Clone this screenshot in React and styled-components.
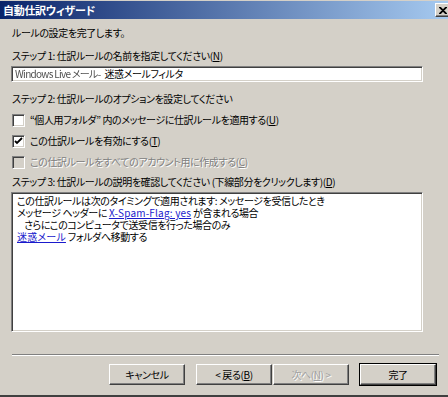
import React from "react";
import styled, { createGlobalStyle } from "styled-components";

const GlobalStyle = createGlobalStyle`
  html, body {
    margin: 0;
    padding: 0;
    background: #d4d0c8;
  }
  body {
    font-family: "Noto Sans CJK JP", "Noto Sans", sans-serif;
    font-size: 10px;
    letter-spacing: -0.4px;
    color: #000;
    font-feature-settings: "palt";
  }
`;

export default function App() {
  return (
    <>
      <GlobalStyle />
      <Window>
        <TitleBar>
          <Title>自動仕訳ウィザード</Title>
          <CloseButton>
            <svg width="8" height="7" viewBox="0 0 8 7">
              <path d="M0 0 L7 7 M1 0 L8 7 M7 0 L0 7 M8 0 L1 7" stroke="#000" strokeWidth="1.2" />
            </svg>
          </CloseButton>
        </TitleBar>

        <Body>
          <Label $top={7}>ルールの設定を完了します。</Label>
          <Label $top={9}>
            ステップ 1: 仕訳ルールの名前を指定してください(<U>N</U>)
          </Label>
          <TextBox>
            <Blurred>Windows Live メール-</Blurred>
            迷惑メールフィルタ
          </TextBox>

          <Label $top={10}>ステップ 2: 仕訳ルールのオプションを設定してください</Label>
          <CheckRow $top={7}>
            <Box />
            <span>“個人用フォルダ” 内のメッセージに仕訳ルールを適用する(<U>U</U>)</span>
          </CheckRow>
          <CheckRow>
            <Box>
              <svg width="9" height="9" viewBox="0 0 9 9">
                <path d="M1 4 L3 6 L8 1" stroke="#000" strokeWidth="1.8" fill="none" />
              </svg>
            </Box>
            <span>この仕訳ルールを有効にする(<U>T</U>)</span>
          </CheckRow>
          <CheckRow $disabled>
            <Box $disabled />
            <span>この仕訳ルールをすべてのアカウント用に作成する(<U>C</U>)</span>
          </CheckRow>

          <Label $top={6}>
            ステップ 3: 仕訳ルールの説明を確認してください (下線部分をクリックします)(<U>D</U>)
          </Label>
          <Description>
            <Line>この仕訳ルールは次のタイミングで適用されます: メッセージを受信したとき</Line>
            <Line>
              メッセージ ヘッダーに <Link>X-Spam-Flag: yes</Link> が含まれる場合
            </Line>
            <Line $indent>さらにこのコンピュータで送受信を行った場合のみ</Line>
            <Line>
              <Link>迷惑メール</Link> フォルダへ移動する
            </Line>
          </Description>
        </Body>

        <Separator />
        <Footer>
          <Button>キャンセル</Button>
          <Pair>
            <Button>&lt; 戻る(<U>B</U>)</Button>
            <Button disabled>次へ(<U>N</U>) &gt;</Button>
          </Pair>
          <Button $default>完了</Button>
        </Footer>
      </Window>
    </>
  );
}

const Window = styled.div`
  width: 448px;
  height: 397px;
  box-sizing: border-box;
  display: flex;
  flex-direction: column;
  padding-top: 1px;
  border-bottom: 2px solid #404040;
  overflow: hidden;
`;

const TitleBar = styled.div`
  height: 18px;
  display: flex;
  align-items: center;
  justify-content: space-between;
  padding-left: 3px;
  background: linear-gradient(to right, #0a246a, #a6caf0);
`;

const Title = styled.div`
  color: #fff;
  font-weight: bold;
  font-size: 11px;
  line-height: 14px;
  letter-spacing: -0.3px;
`;

const CloseButton = styled.div`
  width: 16px;
  height: 14px;
  box-sizing: border-box;
  margin-right: -3px;
  display: flex;
  align-items: center;
  justify-content: center;
  background: #d4d0c8;
  border: 1px solid;
  border-color: #fff #404040 #404040 #fff;
  box-shadow: inset -1px -1px #808080;
`;

const Body = styled.div`
  display: flex;
  flex-direction: column;
  padding: 0 0 0 11px;
`;

const Label = styled.div`
  margin-top: ${(p) => p.$top || 0}px;
  padding-left: 1px;
  line-height: 14px;
  white-space: nowrap;
`;

const U = styled.span`
  text-decoration: underline;
`;

const TextBox = styled.div`
  margin-top: 3px;
  width: 412px;
  height: 16px;
  box-sizing: border-box;
  display: flex;
  align-items: center;
  padding-left: 3px;
  background: #fff;
  border: 1px solid;
  border-color: #808080 #fff #fff #808080;
  box-shadow: inset 1px 1px #404040, inset -1px -1px #d4d0c8;
  line-height: 14px;
  white-space: nowrap;
`;

const Blurred = styled.span`
  color: #505050;
  font-size: 10px;
  letter-spacing: -0.7px;
  filter: blur(0.7px);
  margin-right: 4px;
`;

const CheckRow = styled.div`
  margin-top: ${(p) => p.$top || 7}px;
  display: flex;
  align-items: center;
  gap: 5px;
  padding-left: 1px;
  line-height: 14px;
  white-space: nowrap;
  color: ${(p) => (p.$disabled ? "#808080" : "#000")};
  text-shadow: ${(p) => (p.$disabled ? "1px 1px #fff" : "none")};
`;

const Box = styled.div`
  width: 13px;
  height: 13px;
  box-sizing: border-box;
  display: flex;
  align-items: center;
  justify-content: center;
  background: ${(p) => (p.$disabled ? "#d4d0c8" : "#fff")};
  border: 1px solid;
  border-color: #808080 #fff #fff #808080;
  box-shadow: inset 1px 1px #404040, inset -1px -1px #d4d0c8;
`;

const Description = styled.div`
  margin-top: 3px;
  width: 412px;
  height: 140px;
  box-sizing: border-box;
  padding: 2px 5px;
  background: #fff;
  border: 1px solid;
  border-color: #808080 #fff #fff #808080;
  box-shadow: inset 1px 1px #404040, inset -1px -1px #d4d0c8;
`;

const Line = styled.div`
  line-height: 12px;
  white-space: nowrap;
  padding-left: ${(p) => (p.$indent ? 7 : 0)}px;
`;

const Link = styled.span`
  color: #1a1acc;
  text-decoration: underline;
  letter-spacing: 0.2px;
`;

const Separator = styled.div`
  margin: 22px 9px 0 12px;
  border-top: 1px solid #808080;
  border-bottom: 1px solid #fff;
`;

const Footer = styled.div`
  display: flex;
  justify-content: flex-end;
  align-items: center;
  gap: 11px;
  padding: 8px 12px 0 0;
`;

const Pair = styled.div`
  display: flex;
  gap: 1px;
`;

const Button = styled.button`
  width: 76px;
  height: 21px;
  box-sizing: border-box;
  padding: 0;
  font-family: inherit;
  font-size: 10px;
  letter-spacing: -0.4px;
  font-feature-settings: "palt";
  line-height: 14px;
  color: #000;
  background: #d4d0c8;
  border: 1px solid;
  border-color: #fff #404040 #404040 #fff;
  box-shadow: inset -1px -1px #808080;
  ${(p) =>
    p.$default &&
    `
    outline: 1px solid #000;
  `}

  &:disabled {
    color: #a0a0a0;
    text-shadow: 1px 1px #fff;
  }
`;
